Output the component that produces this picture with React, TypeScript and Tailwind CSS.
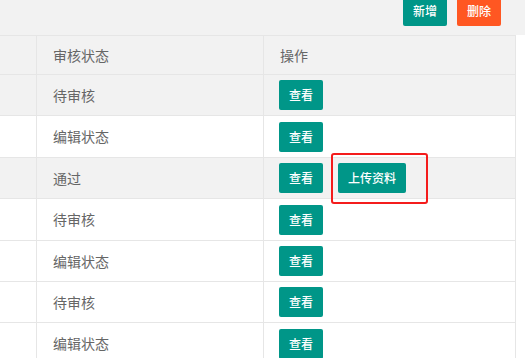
import React from "react";

const rows: { status: string; h: string; gray: boolean; upload?: boolean }[] = [
  { status: "待审核", h: "h-[41px]", gray: true },
  { status: "编辑状态", h: "h-[42px]", gray: false },
  { status: "通过", h: "h-[41px]", gray: true, upload: true },
  { status: "待审核", h: "h-[42px]", gray: false },
  { status: "编辑状态", h: "h-[41px]", gray: false },
  { status: "待审核", h: "h-[41px]", gray: false },
  { status: "编辑状态", h: "h-[42px]", gray: false },
];

function Btn({ children, className = "" }: { children: React.ReactNode; className?: string }) {
  return (
    <div
      className={`h-[30px] px-[10px] rounded-[2px] bg-[#009688] text-white text-[12px] font-medium flex items-center justify-center leading-none ${className}`}
    >
      {children}
    </div>
  );
}

export default function App() {
  return (
    <div
      className="w-[525px] h-[358px] overflow-hidden bg-white"
      style={{ fontFamily: '"Noto Sans CJK SC", "Noto Sans", sans-serif' }}
    >
      <div className="h-[35px] bg-[#f2f2f2] flex items-end justify-end pr-[24px] pb-[9px] gap-[10px] overflow-hidden">
        <Btn className="shrink-0">新增</Btn>
        <Btn className="shrink-0 bg-[#ff5722]">删除</Btn>
      </div>
      <div className="w-[516px] text-[14px] text-[#666]">
        <div className="flex h-[40px] bg-[#f2f2f2] border-y border-[#e6e6e6]">
          <div className="w-[37px] border-r border-[#e6e6e6]" />
          <div className="w-[227px] border-r border-[#e6e6e6] pl-4 flex items-center">审核状态</div>
          <div className="w-[252px] border-r border-[#e6e6e6] pl-4 flex items-center">操作</div>
        </div>
        {rows.map((r, i) => (
          <div
            key={i}
            className={`flex ${r.h} border-b border-[#e6e6e6] ${r.gray ? "bg-[#f2f2f2]" : "bg-white"}`}
          >
            <div className="w-[37px] border-r border-[#e6e6e6]" />
            <div className="w-[227px] border-r border-[#e6e6e6] pl-4 flex items-center">{r.status}</div>
            <div className="w-[252px] border-r border-[#e6e6e6] pl-[15px] flex items-center gap-[15px]">
              <Btn>查看</Btn>
              {r.upload && (
                <div className="relative">
                  <Btn>上传资料</Btn>
                  <span className="absolute left-[-7px] right-[-22px] top-[-10px] bottom-[-11px] border-2 border-[#f41c1c] rounded-[3px] pointer-events-none" />
                </div>
              )}
            </div>
          </div>
        ))}
      </div>
    </div>
  );
}
